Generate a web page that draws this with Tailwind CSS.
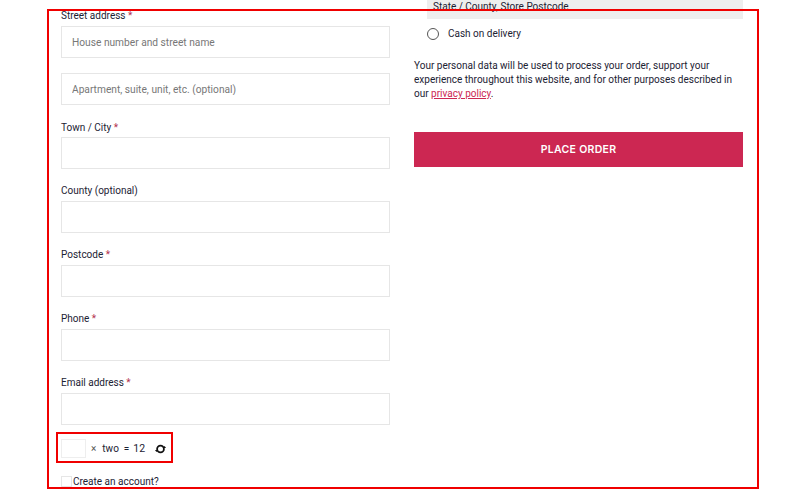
<!DOCTYPE html>
<html>
<head>
    <title>Checkout</title>
    <script src="https://cdn.jsdelivr.net/npm/@tailwindcss/browser@4"></script>
</head>
<body class="relative h-[492px] w-[800px] overflow-hidden bg-white font-['Roboto',sans-serif] text-[10px] text-[#1c2233]">
    <div class="flex gap-6 pl-[61px]">
        <!-- billing form -->
        <form class="flex w-[329px] flex-col pt-[9px]">
            <label class="h-[17px] leading-[13px]">Street address <span class="text-[#b3334f]">*</span></label>
            <input class="h-[32px] border border-[#e6e6e6] px-[10px] text-[10.2px] placeholder:text-[#777]" placeholder="House number and street name">
            <input class="mt-[15px] h-[32px] border border-[#e6e6e6] px-[10px] text-[10.2px] placeholder:text-[#777]" placeholder="Apartment, suite, unit, etc. (optional)">

            <label class="mt-[16px] h-[16px] leading-[13px]">Town / City <span class="text-[#b3334f]">*</span></label>
            <input class="h-[32px] border border-[#e6e6e6]">

            <label class="mt-[15px] h-[17px] leading-[13px]">County (optional)</label>
            <input class="h-[32px] border border-[#e6e6e6]">

            <label class="mt-[15px] h-[17px] leading-[13px]">Postcode <span class="text-[#b3334f]">*</span></label>
            <input class="h-[32px] border border-[#e6e6e6]">

            <label class="mt-[15px] h-[17px] leading-[13px]">Phone <span class="text-[#b3334f]">*</span></label>
            <input class="h-[32px] border border-[#e6e6e6]">

            <label class="mt-[15px] h-[17px] leading-[13px]">Email address <span class="text-[#b3334f]">*</span></label>
            <input class="h-[32px] border border-[#e6e6e6]">

            <div class="mt-[14px] flex h-[19px] items-center">
                <input class="h-[19px] w-[25px] border border-[#eeeeee]">
                <span class="ml-[5px] text-[#555]">×</span>
                <span class="ml-[6px]">two</span>
                <span class="ml-[5px]">=</span>
                <span class="ml-[4px] text-[10.5px]">12</span>
                <svg class="ml-[10px]" width="11" height="10" viewBox="0 0 11 10" fill="none" stroke="#111" stroke-width="1.8">
                    <circle cx="5.5" cy="5" r="3.4" />
                    <path d="M11 4H7.6L9.6 2z" fill="#111" stroke="none" />
                    <path d="M0 6h3.4L1.4 8z" fill="#111" stroke="none" />
                </svg>
            </div>

            <div class="mt-[17px] flex items-center">
                <input type="checkbox" class="h-[11px] w-[11px] appearance-none border border-[#e6e6e6]">
                <span class="ml-[1px] leading-[13px]">Create an account?</span>
            </div>
        </form>

        <!-- order summary -->
        <div class="flex w-[329px] flex-col">
            <div class="ml-[13px] h-[19px] bg-[#eeeeee] pl-[6px] leading-[13px]">State / County, Store Postcode</div>
            <div class="mt-[8px] ml-[13px] flex h-[13px] items-center">
                <span class="h-[12px] w-[12px] rounded-full border-[1.5px] border-[#555]"></span>
                <span class="ml-[9px]">Cash on delivery</span>
            </div>
            <p class="mt-[19px] leading-[14px]">Your personal data will be used to process your order, support your experience throughout this website, and for other purposes described in our <a class="text-[#cc2752] underline">privacy policy</a>.</p>
            <button class="mt-[31px] h-[35px] bg-[#cc2752] font-['Inter',sans-serif] text-[10.5px] font-semibold tracking-[0.3px] text-white">PLACE ORDER</button>
        </div>
    </div>

    <!-- red annotation boxes -->
    <div class="absolute top-[9px] left-[47px] h-[480px] w-[712px] border-2 border-[#f00000]"></div>
    <div class="absolute top-[432px] left-[56px] h-[31px] w-[117px] border-2 border-[#f00000]"></div>
</body>
</html>
